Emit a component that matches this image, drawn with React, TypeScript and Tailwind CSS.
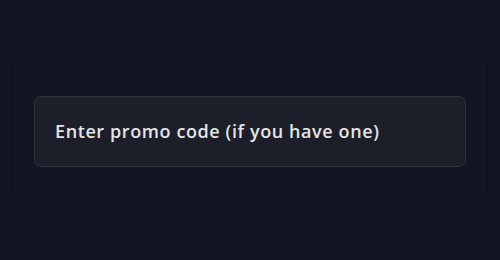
export default function App() {
  return (
    <div className="h-[260px] w-[500px] bg-[#121521] pt-[66px]">
      <div className="mx-[12px] h-[127px] border-x border-[#0d1019] bg-[#131622] px-[21px] pt-[30px]">
        <div className="flex h-[71px] items-center rounded-[7px] border border-[#2d313c] bg-[#1c1f2a] px-[20px] shadow-[inset_0_1px_0_rgba(255,255,255,0.03)]">
          <span className="text-[18px] font-semibold tracking-[0.6px] text-[#e4e4e6] [font-family:'Open_Sans',sans-serif]">
            Enter promo code (if you have one)
          </span>
        </div>
      </div>
    </div>
  );
}
